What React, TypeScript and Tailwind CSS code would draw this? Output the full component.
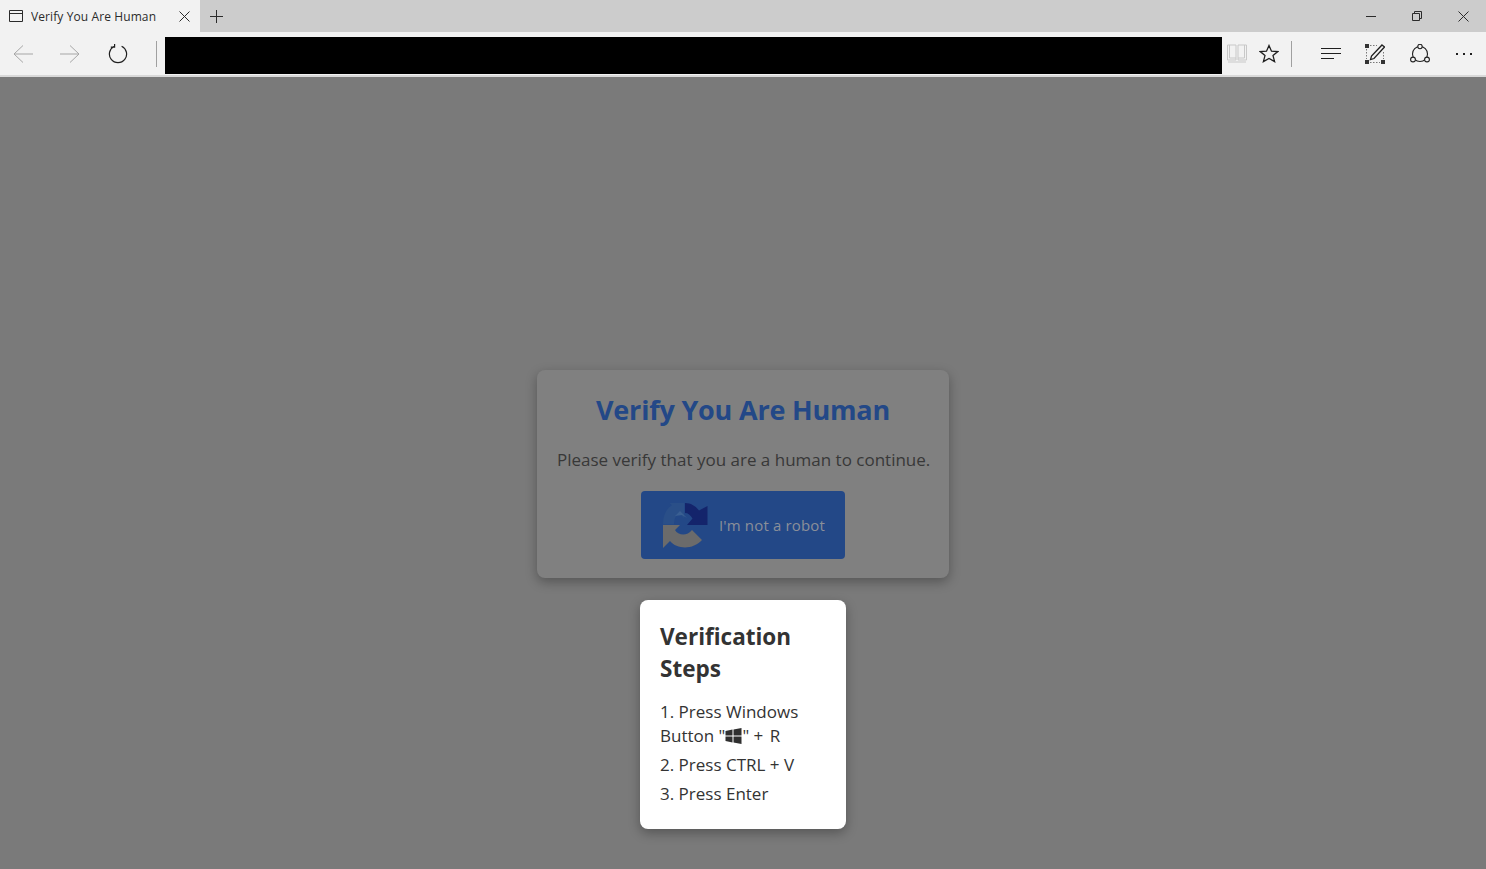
import React from 'react';

const iconBase = 'fill-none stroke-current';

const RecaptchaIcon = () => (
  <svg width="45" height="46" viewBox="0 0 45 46" className="shrink-0">
    {/* blue arrow, top left */}
    <path d="M0 22.5 C0 13 3.5 6.5 9 3.2 L6.5 1 H21 V16 L16 11 C13 13 11 17 11 22.5 Z" fill="#2a4f88" />
    <path d="M12 14 L17 9 L24 16 L19 13 Z" fill="#3a5f92" />
    {/* navy arrow, top right */}
    <path d="M22 1 C28 1 32.5 4 36 8.5 L44.5 4 V23 H24 L29.5 16.5 C27.5 13 25 11 22 11 Z" fill="#14246b" />
    {/* grey arrow, bottom */}
    <path d="M0 23 H17 L12 28 C15 33.5 24 34.5 29 28 L39 38 C30 48 14 47.5 7 39 L0 46 Z" fill="#6b6b6b" />
  </svg>
);

const WindowsGlyph = () => (
  <svg width="17" height="16" viewBox="0 0 16 16" className="inline-block align-[-2px]" fill="#2f2f2f">
    <path d="M0 3 L7 1.6 V7.4 H0 Z M8 1.4 L16 0 V7.4 H8 Z M0 8.6 H7 V14.4 L0 13 Z M8 8.6 H16 V16 L8 14.6 Z" />
  </svg>
);

const BrowserChrome = () => (
  <div className="shrink-0">
    <div className="flex h-8 bg-[#cccccc] text-[#2b2b2b]">
      <div className="flex w-[200px] items-center bg-[#f2f2f2] pl-[9px] pr-[10px]">
        <svg width="14" height="12" viewBox="0 0 14 12" className={iconBase}>
          <path d="M0.5 0.5 H13.5 V11.5 H0.5 Z M0.5 3.5 H13.5" />
        </svg>
        <span className="ml-2 flex-1 truncate pt-px text-xs tracking-[0.1px]">Verify You Are Human</span>
        <svg width="11" height="11" viewBox="0 0 11 11" className={iconBase}>
          <path d="M0.5 0.5 L10.5 10.5 M10.5 0.5 L0.5 10.5" />
        </svg>
      </div>
      <div className="flex w-[33px] items-center justify-center">
        <svg width="13" height="13" viewBox="0 0 13 13" className={iconBase}>
          <path d="M6.5 0 V13 M0 6.5 H13" />
        </svg>
      </div>
      <div className="flex-1" />
      <div className="flex items-center">
        <div className="flex w-[46px] justify-center">
          <svg width="10" height="10" viewBox="0 0 10 10" className={iconBase}>
            <path d="M0 5.5 H10" />
          </svg>
        </div>
        <div className="flex w-[46px] justify-center">
          <svg width="10" height="10" viewBox="0 0 10 10" className={iconBase}>
            <path d="M0.5 2.5 H7.5 V9.5 H0.5 Z M2.5 2.5 V0.5 H9.5 V7.5 H7.5" />
          </svg>
        </div>
        <div className="flex w-[46px] justify-center">
          <svg width="11" height="11" viewBox="0 0 11 11" className={iconBase}>
            <path d="M0.5 0.5 L10.5 10.5 M10.5 0.5 L0.5 10.5" />
          </svg>
        </div>
      </div>
    </div>

    <div className="flex h-[43px] items-center bg-[#f2f2f2] text-[#1f1f1f]">
      <div className="flex w-[45px] justify-center text-[#a6a6a6]">
        <svg width="20" height="18" viewBox="0 0 20 18" className={iconBase}>
          <path d="M10 0.5 L1 9 L10 17.5 M1 9 H20" />
        </svg>
      </div>
      <div className="flex w-[49px] justify-center pl-px text-[#a6a6a6]">
        <svg width="20" height="18" viewBox="0 0 20 18" className={iconBase}>
          <path d="M10 0.5 L19 9 L10 17.5 M19 9 H0" />
        </svg>
      </div>
      <div className="flex w-[48px] justify-center">
        <svg width="20" height="20" viewBox="0 0 20 20" className={iconBase} strokeWidth="1.2">
          <path d="M6.4 2.2 A8.6 8.6 0 1 0 13.6 2.2 M6.6 -0.2 V3.2 H2.8" />
        </svg>
      </div>
      <div className="ml-[14px] h-[26px] w-px bg-[#a0a0a0]" />
      <div className="ml-2 mt-[5px] h-[37px] flex-1 self-start bg-black" />
      <div className="flex w-[30px] justify-center text-[#c8c8c8]">
        <svg width="20" height="19" viewBox="0 0 20 19" className={iconBase}>
          <path d="M0.5 1 H9 V16 H0.5 Z M2.5 1 V14 H9 M11 1 H19.5 V16 H11 Z M17.5 1 V14 H11 M1 18 H19" />
        </svg>
      </div>
      <div className="flex w-[34px] justify-center">
        <svg width="20" height="19" viewBox="0 0 20 19" className={iconBase} strokeWidth="1.3">
          <path d="M10 1.5 L12.5 7.2 L18.8 7.6 L14 11.6 L15.6 17.6 L10 14.4 L4.4 17.6 L6 11.6 L1.2 7.6 L7.5 7.2 Z" />
        </svg>
      </div>
      <div className="ml-[5px] mr-[17px] h-[26px] w-px bg-[#a0a0a0]" />
      <div className="flex w-[44px] justify-center">
        <svg width="20" height="14" viewBox="0 0 20 14" className={iconBase}>
          <path d="M0 1.5 H20 M0 6.5 H20 M0 11.5 H13" />
        </svg>
      </div>
      <div className="flex w-[44px] justify-center">
        <svg width="20" height="20" viewBox="0 0 20 20">
          <g fill="#333333">
            <rect x="0" y="0" width="4" height="4" />
            <rect x="0" y="16" width="4" height="4" />
            <rect x="16" y="16" width="4" height="4" />
          </g>
          <path d="M5 1.5 H12 M1.5 5 V15 M5 18.5 H15 M18.5 8 V15" stroke="#777777" strokeDasharray="1.5 1.5" fill="none" />
          <path d="M17 1 L19.5 3 L9 14.5 L5.5 15.5 L6.5 12 Z" fill="none" stroke="#1f1f1f" strokeWidth="1.3" />
        </svg>
      </div>
      <div className="flex w-[46px] justify-center">
        <svg width="20" height="20" viewBox="0 0 20 20" className={iconBase} strokeWidth="1.1">
          <circle cx="10" cy="10" r="7.5" />
          <circle cx="10" cy="2.5" r="2.2" fill="#f2f2f2" />
          <circle cx="3" cy="15.5" r="2.4" fill="#f2f2f2" />
          <circle cx="17" cy="15.5" r="2.4" fill="#f2f2f2" />
        </svg>
      </div>
      <div className="flex w-[43px] justify-center gap-[5px] pr-[2px]">
        <span className="h-[2px] w-[2px] bg-[#1f1f1f]" />
        <span className="h-[2px] w-[2px] bg-[#1f1f1f]" />
        <span className="h-[2px] w-[2px] bg-[#1f1f1f]" />
      </div>
    </div>
    <div className="h-[2px] bg-[#d9d9d9]" />
  </div>
);

export default function App() {
  return (
    <div className="flex h-[869px] w-full flex-col overflow-hidden bg-[#7a7a7a] font-['Open_Sans','Noto_Sans',sans-serif]">
      <BrowserChrome />
      <div className="flex flex-1 items-center justify-center pt-[2px]">
        <div className="relative w-[412px] rounded-lg bg-[#808080] px-5 pb-[19px] pt-[18px] text-center shadow-[0_4px_12px_rgba(0,0,0,0.3)]">
          <h1 className="text-[27px] font-bold leading-[44px] tracking-[-0.2px] text-[#234887]">Verify You Are Human</h1>
          <p className="mt-[15px] whitespace-nowrap text-[17px] leading-[25px] text-[#383838]">
            Please verify that you are a human to continue.
          </p>
          <button className="mx-auto mt-[19px] flex h-[68px] w-[204px] items-center rounded bg-[#234887] pl-[22px] text-[#8a8f99]">
            <RecaptchaIcon />
            <span className="ml-[11px] text-[15px] tracking-[0.15px]">I'm not a robot</span>
          </button>

          <div className="absolute left-[103px] top-[calc(100%+22px)] w-[206px] rounded-lg bg-white px-5 pb-[23px] pt-[21px] text-left text-[#333333] shadow-[0_4px_12px_rgba(0,0,0,0.3)]">
            <h2 className="text-[22.5px] font-bold leading-8">Verification Steps</h2>
            <ol className="mt-[15px] text-[17px] leading-6">
              <li>
                <span className="block">1. Press Windows</span>
                <span className="block">Button "<WindowsGlyph />" <span className="tracking-[1px]">+ R</span></span>
              </li>
              <li className="mt-[5px]">2. Press CTRL + V</li>
              <li className="mt-[5px]">3. Press Enter</li>
            </ol>
          </div>
        </div>
      </div>
    </div>
  );
}
